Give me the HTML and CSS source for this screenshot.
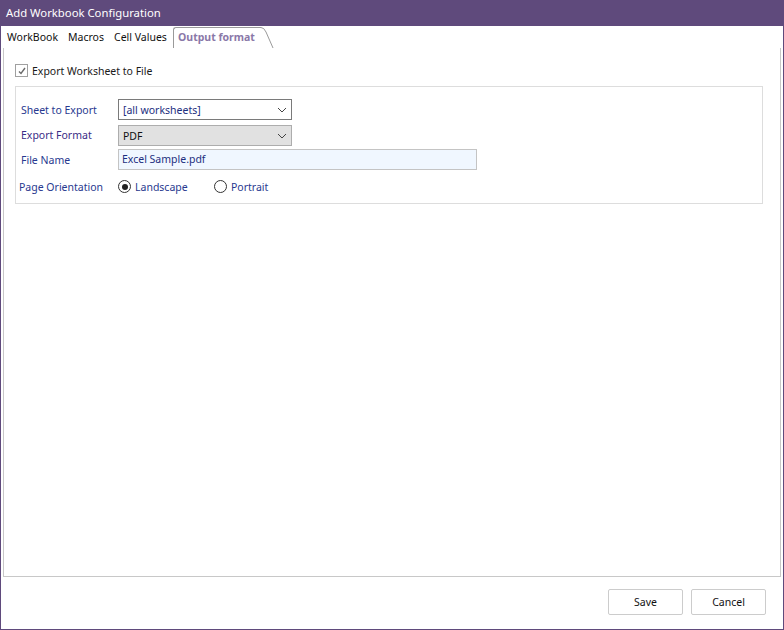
FILE: index.html
```html
<!DOCTYPE html>
<html lang="en">

<head>
    <meta charset="UTF-8">
    <meta name="viewport" content="width=device-width, initial-scale=1.0">
    <title>Add Workbook Configuration</title>
    <link rel="stylesheet" href="styles.css">
</head>

<body>
    <div class="window">
        <div class="title-bar">Add Workbook Configuration</div>

        <div class="tabs">
            <span class="tab tab-workbook">WorkBook</span>
            <span class="tab tab-macros">Macros</span>
            <span class="tab tab-cells">Cell Values</span>
            <span class="tab active">
                Output format
                <svg class="tab-curve" width="16" height="22" viewBox="0 0 16 22">
                    <path d="M0 0.5 H3 Q6 0.5 8 5 L15 21" fill="#fff" stroke="#9a9a9a" stroke-width="1" />
                </svg>
            </span>
        </div>

        <div class="tab-page">
            <label class="check-row">
                <span class="checkbox">
                    <svg width="10" height="10" viewBox="0 0 10 10">
                        <path d="M2 5.5 L4 7.5 L8 2" fill="none" stroke="#6a6a6a" stroke-width="1.4" />
                    </svg>
                </span>
                Export Worksheet to File
            </label>

            <div class="group">
                <div class="row row-sheet">
                    <span class="field-label">Sheet to Export</span>
                    <div class="combo">
                        <span>[all worksheets]</span>
                        <svg width="10" height="6" viewBox="0 0 10 6"><path d="M1 1 L5 5 L9 1" fill="none" stroke="#444" /></svg>
                    </div>
                </div>
                <div class="row row-format">
                    <span class="field-label format-label">Export Format</span>
                    <div class="combo disabled">
                        <span>PDF</span>
                        <svg width="10" height="6" viewBox="0 0 10 6"><path d="M1 1 L5 5 L9 1" fill="none" stroke="#444" /></svg>
                    </div>
                </div>
                <div class="row row-file">
                    <span class="field-label">File Name</span>
                    <div class="text-box">Excel Sample.pdf</div>
                </div>
                <div class="row orientation">
                    <span class="field-label">Page Orientation</span>
                    <span class="radio checked"></span>
                    <span class="radio-text landscape">Landscape</span>
                    <span class="radio"></span>
                    <span class="radio-text">Portrait</span>
                </div>
            </div>
        </div>

        <div class="buttons">
            <button class="btn">Save</button>
            <button class="btn">Cancel</button>
        </div>
    </div>
</body>

</html>
```

FILE: styles.css
```css
body {
    margin: 0;
    padding: 0;
    background-color: #ffffff;
    font-family: "Noto Sans", "Open Sans", sans-serif;
    font-size: 10.5px;
    color: #1a1a1a;
}

.window {
    width: 784px;
    height: 630px;
    box-sizing: border-box;
    border: 1px solid #5f4a7c;
    border-top: none;
    display: flex;
    flex-direction: column;
    background: #fff;
}

.title-bar {
    height: 26px;
    margin: 0 -1px;
    background-color: #5f4a7c;
    color: #ffffff;
    font-size: 11.3px;
    line-height: 26px;
    padding-left: 6px;
}

.tabs {
    display: flex;
    align-items: flex-end;
    height: 22px;
    padding-left: 5px;
}

.tab {
    color: #111;
    line-height: 16px;
    padding-bottom: 3px;
}

.tab-workbook {
    width: 61px;
    padding-left: 1px;
}

.tab-macros {
    width: 46px;
}

.tab-cells {
    width: 59px;
}

.tab.active {
    position: relative;
    padding: 1px 4px 3px 4px;
    border: 1px solid #9a9a9a;
    border-right: none;
    border-bottom: none;
    border-radius: 3px 0 0 0;
    color: #8a78a8;
    font-weight: bold;
}

.tab-curve {
    position: absolute;
    right: -15px;
    top: -1px;
}

.tab-page {
    flex: 1;
    margin: 0 2px 0 2px;
    border: 1px solid #c8c8c8;
    border-top: none;
    padding: 16px 17px 0 11px;
}

.check-row {
    display: flex;
    align-items: center;
    gap: 4px;
    height: 13px;
}

.checkbox {
    width: 11px;
    height: 11px;
    border: 1px solid #a0a0a0;
    display: flex;
    align-items: center;
    justify-content: center;
}

.group {
    margin-top: 9px;
    border: 1px solid #dddddd;
    height: 118px;
    padding-top: 12px;
    box-sizing: border-box;
}

.row {
    display: flex;
    align-items: center;
    height: 21px;
}

.row-format {
    margin-top: 5px;
}

.row-file {
    margin-top: 3px;
}

.orientation {
    margin-top: 6px;
}

.field-label {
    width: 97px;
    padding-left: 5px;
    color: #28398f;
}

.format-label {
    color: #3a2c86;
    position: relative;
    top: -1px;
}

.combo {
    width: 164px;
    height: 19px;
    border: 1px solid #7a7a7a;
    display: flex;
    align-items: center;
    justify-content: space-between;
    padding: 0 4px 0 4px;
    color: #1d2f80;
}

.combo.disabled {
    background: #e1e1e1;
    border-color: #adadad;
    color: #111;
}

.text-box {
    width: 354px;
    height: 19px;
    line-height: 19px;
    border: 1px solid #c4c4c4;
    background: #f0f7ff;
    padding-left: 3px;
    color: #1d2f80;
}

.orientation .field-label {
    width: 99px;
    padding-left: 3px;
}

.radio {
    width: 11px;
    height: 11px;
    border: 1px solid #333;
    border-radius: 50%;
    position: relative;
    margin-right: 4px;
}

.radio.checked::after {
    content: "";
    position: absolute;
    left: 2.5px;
    top: 2.5px;
    width: 6px;
    height: 6px;
    border-radius: 50%;
    background: #222;
}

.radio-text {
    color: #28398f;
}

.radio-text.landscape {
    width: 79px;
}

.buttons {
    height: 52px;
    display: flex;
    justify-content: flex-end;
    align-items: center;
    gap: 8px;
    padding-right: 17px;
    padding-bottom: 2px;
    box-sizing: border-box;
}

.btn {
    width: 75px;
    height: 26px;
    border: 1px solid #cccccc;
    border-radius: 2px;
    background: #fff;
    font-family: inherit;
    font-size: 10.5px;
    color: #111;
}
```
